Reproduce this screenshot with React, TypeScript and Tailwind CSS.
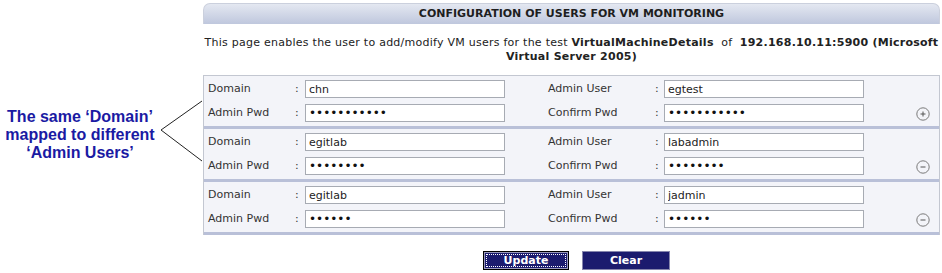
import React from 'react';

type UserRow = {
  domain: string;
  user: string;
  pwdLength: number;
  action: 'add' | 'remove';
};

const rows: UserRow[] = [
  { domain: 'chn', user: 'egtest', pwdLength: 11, action: 'add' },
  { domain: 'egitlab', user: 'labadmin', pwdLength: 8, action: 'remove' },
  { domain: 'egitlab', user: 'jadmin', pwdLength: 6, action: 'remove' },
];

function CircleIcon({ kind }: { kind: 'add' | 'remove' }) {
  return (
    <svg width="14" height="14" viewBox="0 0 14 14" fill="none">
      <circle cx="7" cy="7" r="6.2" stroke="#7a7a7a" strokeWidth="1" />
      <line x1="4.5" y1="7" x2="9.5" y2="7" stroke="#555" strokeWidth="1" />
      {kind === 'add' && <line x1="7" y1="4.5" x2="7" y2="9.5" stroke="#555" strokeWidth="1" />}
    </svg>
  );
}

function Field({ value, password }: { value: string; password?: boolean }) {
  return (
    <input
      type={password ? 'password' : 'text'}
      defaultValue={value}
      readOnly
      className={
        password
          ? 'w-[200px] h-[18px] border border-[#a7abb3] bg-white px-[3px] text-[12px] text-[#111] outline-none'
          : 'w-[200px] h-[18px] border border-[#a7abb3] bg-white px-[3px] text-[11px] text-[#222] outline-none'
      }
    />
  );
}

function Record({ row }: { row: UserRow }) {
  const pwd = 'x'.repeat(row.pwdLength);
  return (
    <div className="bg-[#f3f4f9] py-[1px] border-b-[3px] border-[#b9c0d8]">
      {/* Domain / Admin User */}
      <div className="flex items-center h-[24px] pl-[4px]">
        <span className="w-[87px]">Domain</span>
        <span className="w-[10px]">:</span>
        <Field value={row.domain} />
        <span className="w-[43px]" />
        <span className="w-[107px]">Admin User</span>
        <span className="w-[9px]">:</span>
        <Field value={row.user} />
      </div>
      {/* Passwords */}
      <div className="flex items-center h-[24px] pl-[4px]">
        <span className="w-[87px]">Admin Pwd</span>
        <span className="w-[10px]">:</span>
        <Field value={pwd} password />
        <span className="w-[43px]" />
        <span className="w-[107px]">Confirm Pwd</span>
        <span className="w-[9px]">:</span>
        <Field value={pwd} password />
        <div className="flex-1 flex justify-end pr-[9px] pt-[1px]">
          <CircleIcon kind={row.action} />
        </div>
      </div>
    </div>
  );
}

export default function App() {
  return (
    <div className="w-[942px] h-[273px] bg-white flex overflow-hidden">
      {/* Callout */}
      <div className="w-[203px] shrink-0 flex items-start pt-[100px]">
        <div className="w-[160px] mt-[8px] text-center text-[16px] leading-[18px] font-bold text-[#1a1aa3] font-['Liberation_Sans',Arial,sans-serif]">
          <div>The same ‘Domain’</div>
          <div>mapped to different</div>
          <div>‘Admin Users’</div>
        </div>
        <svg width="43" height="62" viewBox="0 0 43 62" fill="none">
          <polyline points="42,1 1,30 42,61" stroke="#222" strokeWidth="1" />
        </svg>
      </div>

      {/* Main panel */}
      <div className="w-[737px] shrink-0 pt-[3px] text-[11px] text-[#333] font-['DejaVu_Sans',Verdana,sans-serif]">
        <div className="h-[21px] rounded-t-[7px] border border-b-0 border-[#cbd0dd] bg-gradient-to-b from-[#e4e8f1] to-[#bfc7dd] flex items-center justify-center font-bold text-[#1e1e1e]">
          CONFIGURATION OF USERS FOR VM MONITORING
        </div>

        <p className="pt-[12px] pb-[11px] px-[1px] leading-[14px] text-center text-[#222] tracking-[0.25px]">
          This page enables the user to add/modify VM users for the test <b>VirtualMachineDetails</b>&nbsp; of &nbsp;<b>192.168.10.11:5900 (Microsoft Virtual Server 2005)</b>
        </p>

        <div className="border-x border-t border-[#c3c7d1]">
          {rows.map((row, i) => (
            <Record key={i} row={row} />
          ))}
        </div>

        <div className="flex justify-center gap-[13px] mt-[16px] pl-[10px]">
          <button className="w-[86px] h-[19px] border border-black bg-[#1b1b6e] p-[2px] shadow-[inset_0_0_0_1px_#9a9abb] flex">
            <span className="flex-1 flex items-center justify-center border border-dotted border-white text-white font-bold text-[11px] leading-none">
              Update
            </span>
          </button>
          <button className="w-[88px] h-[19px] border border-[#8686ad] bg-[#1b1b6e] flex items-center justify-center text-white font-bold text-[11px] leading-none">
            Clear
          </button>
        </div>
      </div>
    </div>
  );
}
